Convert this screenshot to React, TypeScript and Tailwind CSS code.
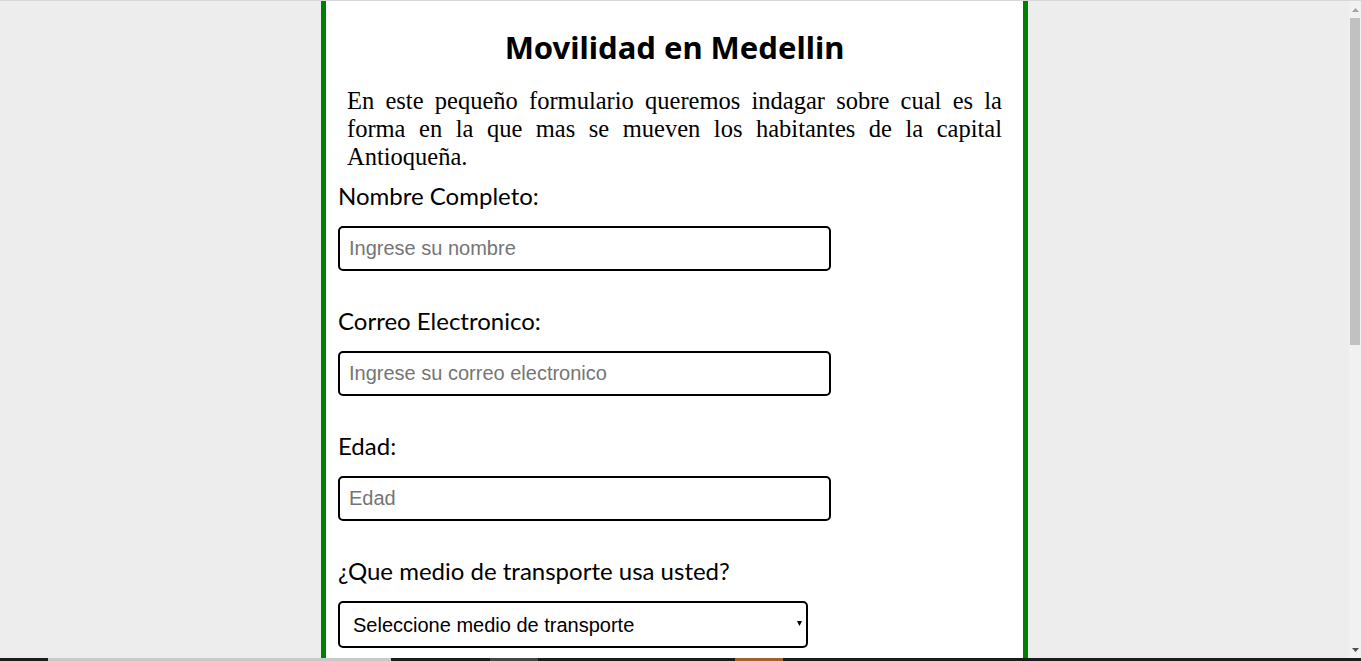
import React from 'react';

// Small form page: "Movilidad en Medellin"
const labelFont = { fontFamily: '"Lato", "Open Sans", sans-serif' };

function Field({ label, placeholder }: { label: string; placeholder: string }) {
  return (
    <div className="flex flex-col">
      <label className="text-[24px] leading-[30px] text-black" style={labelFont}>
        {label}
      </label>
      <input
        type="text"
        placeholder={placeholder}
        className="mt-[15px] h-[45px] w-[493px] rounded-[5px] border-2 border-black bg-white px-[9px] text-[20px] text-black outline-none placeholder:text-[#757575] font-['Liberation_Sans',Arial,sans-serif]"
      />
    </div>
  );
}

function Scrollbar() {
  return (
    <div className="flex w-[12px] flex-col bg-[#f1f1f1]">
      <div className="flex h-[17px] items-center justify-center">
        <svg width="7" height="4" viewBox="0 0 7 4">
          <path d="M0 4 L3.5 0 L7 4 Z" fill="#a3a3a3" />
        </svg>
      </div>
      <div className="mx-[1px] h-[327px] bg-[#c1c1c1]" />
      <div className="flex-1" />
      <div className="flex h-[17px] items-center justify-center">
        <svg width="7" height="4" viewBox="0 0 7 4">
          <path d="M0 0 L7 0 L3.5 4 Z" fill="#505050" />
        </svg>
      </div>
    </div>
  );
}

export default function App() {
  return (
    <div className="flex h-[661px] w-[1361px] flex-col overflow-hidden bg-[#ededed]">
      <div className="h-[1px] bg-[#d8d8d8]" />

      <div className="flex min-h-0 flex-1">
        <div className="min-w-0 flex-1 overflow-hidden">
          <main className="mx-auto h-full w-[707px] border-x-[5px] border-[#008000] bg-white pt-[26px]">
            <h1
              className="text-center text-[31px] font-bold leading-[40px] text-black"
              style={{ fontFamily: '"Noto Sans", "Open Sans", sans-serif' }}
            >
              Movilidad en Medellin
            </h1>

            <p className="mt-[20px] px-[21px] text-justify text-[24.5px] leading-[28px] text-black font-['Liberation_Serif','Times_New_Roman',serif]">
              En este pequeño formulario queremos indagar sobre cual es la forma en la que mas se mueven los
              habitantes de la capital Antioqueña.
            </p>

            <form className="mt-[10px] flex flex-col gap-[35px] pl-[12px]">
              <Field label="Nombre Completo:" placeholder="Ingrese su nombre" />
              <Field label="Correo Electronico:" placeholder="Ingrese su correo electronico" />
              <Field label="Edad:" placeholder="Edad" />

              <div className="flex flex-col">
                <label className="text-[24px] leading-[30px] text-black" style={labelFont}>
                  ¿Que medio de transporte usa usted?
                </label>
                <div className="relative mt-[15px] w-[470px]">
                  <select className="h-[47px] w-full appearance-none rounded-[5px] border-2 border-black bg-white pl-[13px] text-[20px] text-black outline-none font-['Liberation_Sans',Arial,sans-serif]">
                    <option>Seleccione medio de transporte</option>
                    <option>Metro</option>
                    <option>Bus</option>
                    <option>Carro particular</option>
                    <option>Moto</option>
                    <option>Bicicleta</option>
                  </select>
                  <svg
                    className="pointer-events-none absolute right-[6px] top-[20px]"
                    width="5"
                    height="5"
                    viewBox="0 0 5 5"
                  >
                    <path d="M0 0 L5 0 L2.5 5 Z" fill="#000" />
                  </svg>
                </div>
              </div>
            </form>
          </main>
        </div>
        <Scrollbar />
      </div>

      {/* taskbar strip at the very bottom */}
      <div className="flex h-[3px] bg-[#1c1c1c]">
        <div className="w-[48px]" />
        <div className="w-[343px] bg-[#c9c9c9]" />
        <div className="w-[99px]" />
        <div className="w-[48px] bg-[#454545]" />
        <div className="w-[197px]" />
        <div className="w-[48px] bg-[#a0642a]" />
      </div>
    </div>
  );
}
